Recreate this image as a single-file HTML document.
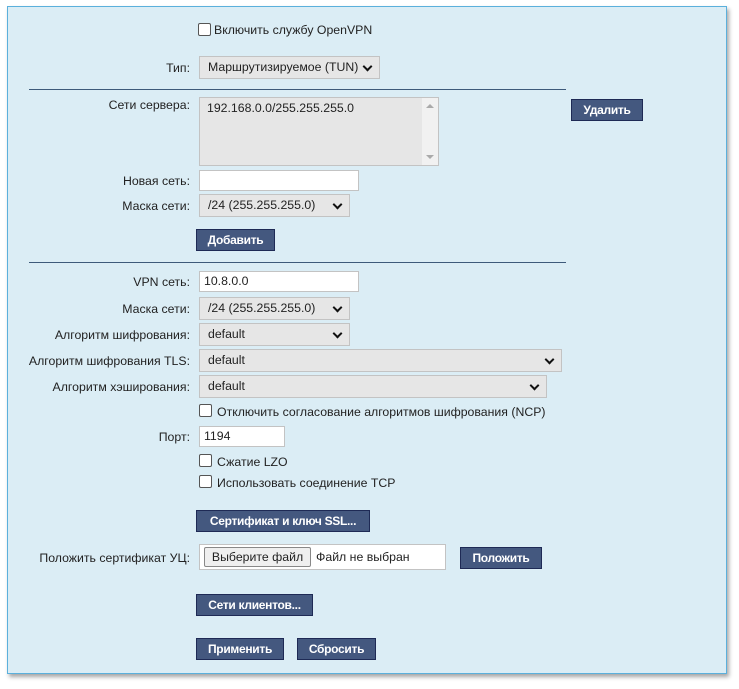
<!DOCTYPE html>
<html><head><meta charset="utf-8"><style>
body{margin:0;width:739px;height:689px;background:#fff;font-family:"Liberation Sans",sans-serif;font-size:12.3px;color:#222;position:relative;overflow:hidden}
.panel{position:absolute;left:7px;top:6px;width:718px;height:666px;background:#dbedf5;border:1px solid #5bb0dc;box-shadow:2px 3px 4px rgba(0,0,0,.35)}
.a{position:absolute;white-space:nowrap}
.lbl{position:absolute;right:549px;text-align:right;white-space:nowrap}
.sel{position:absolute;background:#e6e6e6;border:1px solid #c3c3c3;box-sizing:border-box;padding-left:8px;line-height:20px;white-space:nowrap}
.sel:after{content:"";position:absolute;right:8px;top:6px;width:5px;height:5px;border-right:2px solid #111;border-bottom:2px solid #111;transform:rotate(45deg)}
.inp{position:absolute;background:#fff;border:1px solid #c3c3c3;box-sizing:border-box;padding-left:4px;line-height:19px}
.btn{position:absolute;background:#44587f;border:1px solid #1e2a55;box-sizing:border-box;color:#fff;font-weight:bold;text-align:center;line-height:20px;letter-spacing:-0.3px;font-size:12px;white-space:nowrap}
.cb{position:absolute;width:11px;height:11px;border:1px solid #555;border-radius:2px;background:#fff}
.hr{position:absolute;left:29px;width:537px;height:1px;background:#3d5a7a}
</style></head><body>
<div class="panel"></div>
<div class="cb" style="left:198px;top:23px"></div><div class="a" style="left:214px;top:23px">Включить службу OpenVPN</div>
<div class="lbl" style="top:61px">Тип:</div>
<div class="sel" style="left:199px;top:56px;width:181px;height:23px;line-height:21px">Маршрутизируемое (TUN)</div>
<div class="hr" style="top:89px"></div>
<div class="lbl" style="top:98px">Сети сервера:</div>
<div class="a" style="left:199px;top:97px;width:240px;height:69px;background:#e6e6e6;border:1px solid #c3c3c3;box-sizing:border-box">
<div class="a" style="left:7px;top:3px">192.168.0.0/255.255.255.0</div>
<div class="a" style="right:0;top:0;width:16px;height:67px;background:#f1f1f1"></div>
<div class="a" style="right:4px;top:6px;border:4px solid transparent;border-bottom:4px solid #aaa;border-top:0"></div>
<div class="a" style="right:4px;bottom:6px;border:4px solid transparent;border-top:4px solid #aaa;border-bottom:0"></div></div>
<div class="btn" style="left:571px;top:99px;width:72px;height:22px">Удалить</div>
<div class="lbl" style="top:174px">Новая сеть:</div>
<div class="inp" style="left:199px;top:170px;width:160px;height:21px"></div>
<div class="lbl" style="top:199px">Маска сети:</div>
<div class="sel" style="left:199px;top:194px;width:151px;height:23px">/24 (255.255.255.0)</div>
<div class="btn" style="left:196px;top:229px;width:79px;height:22px">Добавить</div>
<div class="hr" style="top:262px"></div>
<div class="lbl" style="top:275px">VPN сеть:</div>
<div class="inp" style="left:199px;top:271px;width:160px;height:21px">10.8.0.0</div>
<div class="lbl" style="top:302px">Маска сети:</div>
<div class="sel" style="left:199px;top:297px;width:151px;height:23px">/24 (255.255.255.0)</div>
<div class="lbl" style="top:328px">Алгоритм шифрования:</div>
<div class="sel" style="left:199px;top:323px;width:151px;height:23px">default</div>
<div class="lbl" style="top:354px">Алгоритм шифрования TLS:</div>
<div class="sel" style="left:199px;top:349px;width:363px;height:23px">default</div>
<div class="lbl" style="top:380px">Алгоритм хэширования:</div>
<div class="sel" style="left:199px;top:375px;width:348px;height:23px">default</div>
<div class="cb" style="left:199px;top:404px"></div><div class="a" style="left:217px;top:405px">Отключить согласование алгоритмов шифрования (NCP)</div>
<div class="lbl" style="top:430px">Порт:</div>
<div class="inp" style="left:199px;top:426px;width:86px;height:21px">1194</div>
<div class="cb" style="left:199px;top:454px"></div><div class="a" style="left:217px;top:455px">Сжатие LZO</div>
<div class="cb" style="left:199px;top:475px"></div><div class="a" style="left:217px;top:476px">Использовать соединение TCP</div>
<div class="btn" style="left:196px;top:510px;width:174px;height:22px">Сертификат и ключ SSL...</div>
<div class="lbl" style="top:551px">Положить сертификат УЦ:</div>
<div class="a" style="left:199px;top:544px;width:247px;height:26px;background:#fff;border:1px solid #c3c3c3;box-sizing:border-box">
<div class="a" style="left:4px;top:2px;width:107px;height:20px;box-sizing:border-box;background:#efefef;border:1px solid #888;border-radius:2px;text-align:center;line-height:18px">Выберите файл</div>
<div class="a" style="left:116px;top:5px">Файл не выбран</div></div>
<div class="btn" style="left:460px;top:547px;width:82px;height:22px">Положить</div>
<div class="btn" style="left:196px;top:594px;width:117px;height:22px">Сети клиентов...</div>
<div class="btn" style="left:196px;top:638px;width:88px;height:22px">Применить</div>
<div class="btn" style="left:297px;top:638px;width:79px;height:22px">Сбросить</div>
</body></html>
